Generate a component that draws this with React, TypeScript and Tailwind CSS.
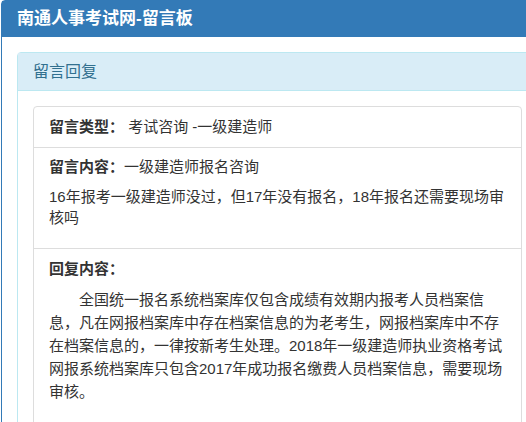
export default function App() {
  return (
    <div
      className="w-[526px] h-[422px] overflow-hidden bg-white text-[#333]"
      style={{ fontFamily: '"Liberation Sans", "Noto Sans CJK SC", sans-serif' }}
    >
      <div className="ml-[1px] w-[553px] border border-[#337ab7] rounded-t-[4px]">
        {/* 标题栏 */}
        <div className="h-[36px] bg-[#337ab7] px-[15px] flex items-center text-white font-bold text-[17px]">
          南通人事考试网-留言板
        </div>

        <div className="p-[15px]">
          <div className="border border-[#bce8f1] rounded-[4px]">
            <div className="h-[38px] bg-[#d9edf7] border-b border-[#bce8f1] px-[15px] flex items-center text-[#31708f] text-[16px]">
              留言回复
            </div>

            <div className="p-[15px]">
              <div className="w-[489px] border border-[#ddd] rounded-[4px] text-[15px]">
                <div className="px-[15px] py-[10px] leading-[20px] border-b border-[#ddd]">
                  <span className="font-bold">留言类型：</span> 考试咨询 -一级建造师
                </div>

                <div className="px-[15px] pt-[9px] pb-[10px] border-b border-[#ddd]">
                  <div className="leading-[20px]">
                    <span className="font-bold">留言内容：</span>一级建造师报名咨询
                  </div>
                  <p className="mt-[9px] leading-[21px] mb-[10px]">
                    16年报考一级建造师没过，但17年没有报名，18年报名还需要现场审核吗
                  </p>
                </div>

                <div className="px-[15px] pt-[10px] pb-[40px]">
                  <div className="leading-[20px] font-bold">回复内容：</div>
                  <p className="mt-[9px] leading-[23px] indent-[2em]">
                    全国统一报名系统档案库仅包含成绩有效期内报考人员档案信息，凡在网报档案库中存在档案信息的为老考生，网报档案库中不存在档案信息的，一律按新考生处理。2018年一级建造师执业资格考试网报系统档案库只包含2017年成功报名缴费人员档案信息，需要现场审核。
                  </p>
                </div>
              </div>
            </div>
          </div>
        </div>
      </div>
    </div>
  );
}
